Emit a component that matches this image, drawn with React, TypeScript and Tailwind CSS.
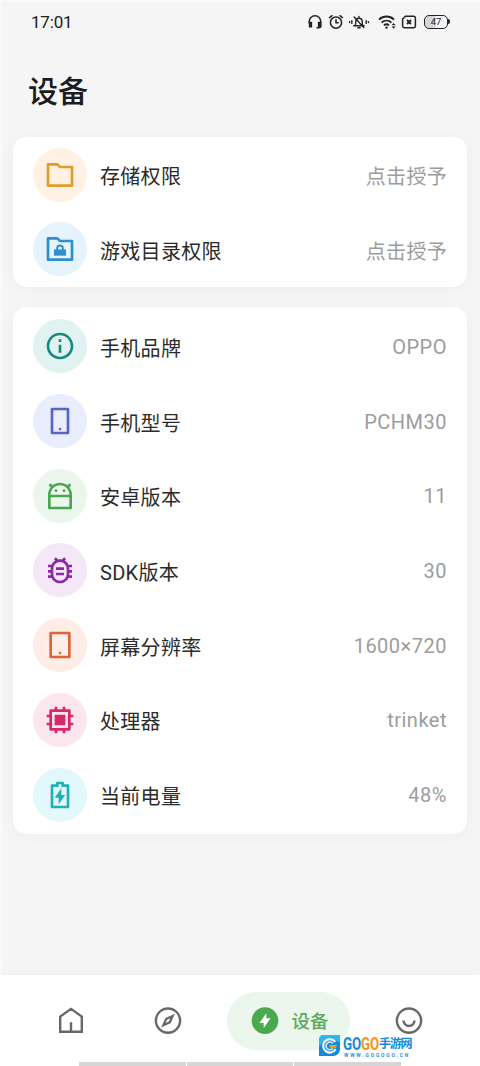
import type { ReactNode } from "react";
import type { IconType } from "react-icons";
import {
  RiAndroidLine,
  RiBattery2ChargeLine,
  RiBug2Line,
  RiCpuLine,
  RiFolderLine,
  RiInformationLine,
  RiSmartphoneLine,
  RiTabletLine,
} from "react-icons/ri";
import { clsx } from "clsx";

interface InfoItem {
  label: string;
  value: string;
  icon: IconType | typeof FolderLockIcon;
  tint: string;
}

function FolderLockIcon({ className }: { className?: string }) {
  return (
    <svg className={className} viewBox="0 0 24 24" fill="none">
      <path d="M3 4h7l2 2h9v14H3z" stroke="currentColor" strokeWidth="2" strokeLinejoin="round" />
      <path d="M7.5 12.3h9V17h-9z" fill="currentColor" />
      <path d="M9.9 13v-1.6a2.1 2.1 0 0 1 4.2 0V13" stroke="currentColor" strokeWidth="1.5" />
    </svg>
  );
}

const PERMISSIONS: InfoItem[] = [
  { label: "存储权限", value: "点击授予", icon: RiFolderLine, tint: "bg-[#fff2e4] text-[#e09c2c]" },
  { label: "游戏目录权限", value: "点击授予", icon: FolderLockIcon, tint: "bg-[#e5f3fd] text-[#308fcb]" },
];

const DEVICE_INFO: InfoItem[] = [
  { label: "手机品牌", value: "OPPO", icon: RiInformationLine, tint: "bg-[#e1f3f1] text-[#168a7d]" },
  { label: "手机型号", value: "PCHM30", icon: RiSmartphoneLine, tint: "bg-[#e9edfd] text-[#5566c4]" },
  { label: "安卓版本", value: "11", icon: RiAndroidLine, tint: "bg-[#ebf6ec] text-[#4ba653]" },
  { label: "SDK版本", value: "30", icon: RiBug2Line, tint: "bg-[#f3e7f8] text-[#8e29a6]" },
  { label: "屏幕分辨率", value: "1600×720", icon: RiTabletLine, tint: "bg-[#feece6] text-[#dc6438]" },
  { label: "处理器", value: "trinket", icon: RiCpuLine, tint: "bg-[#fce6ee] text-[#d8286a]" },
  { label: "当前电量", value: "48%", icon: RiBattery2ChargeLine, tint: "bg-[#e2f8fc] text-[#1fb0b8]" },
];

function StatusBar() {
  return (
    <header className="flex h-[43px] items-center justify-between pr-[30px] pl-[31px] text-[#222]">
      <span className="text-[17px] leading-5 tracking-[-0.2px]">17:01</span>
      <div className="flex items-center">
        {/* headset */}
        <svg className="h-4 w-4" viewBox="0 0 16 16" fill="none" stroke="currentColor" strokeWidth="1.5">
          <path d="M2.2 9.500V7.600a5.800 5.800 0 0 1 11.600 0v4.200a2 2 0 0 1-2 2H9.500" />
          <path d="M2.600 8.600h1.800v4.200H2.600zM11.600 8.600h1.800v4.200h-1.800z" fill="currentColor" />
        </svg>
        {/* alarm */}
        <svg className="ml-[5px] h-4 w-4" viewBox="0 0 16 16" fill="none" stroke="currentColor" strokeWidth="1.5" strokeLinecap="round">
          <circle cx="8" cy="8.6" r="5.6" />
          <path d="M8 5.8v3h2.2M1.6 3.6 4 1.7M14.4 3.6 12 1.7" />
        </svg>
        {/* muted bell with vibration marks */}
        <svg className="ml-[4px] h-4 w-[22px]" viewBox="0 0 22 16" fill="none" stroke="currentColor" strokeWidth="1.4" strokeLinecap="round">
          <path d="M5.8 11.8h10.4M7.2 11.4c.6-1 .6-2.4.6-4a3.2 3.2 0 0 1 6.4 0c0 1.6 0 3 .6 4M11 2.4v1.2M9.8 13.8h2.4M6.2 3l9.6 10.6" />
          <path d="M3.8 6.8v2.6M1.6 7.6v1M18.2 6.8v2.6M20.4 7.6v1" />
        </svg>
        {/* wifi */}
        <svg className="ml-[8px] h-4 w-[19px]" viewBox="0 0 19 16" fill="none" stroke="currentColor" strokeWidth="1.9">
          <path d="M1 5.6c4.4-4.1 10.6-4.1 15 0M3.5 8.6c3-2.7 7-2.7 10 0M6 11.4c1.6-1.4 3.4-1.4 5 0" />
          <circle cx="8.5" cy="13.6" r="1.2" fill="currentColor" stroke="none" />
          <path d="m13.6 11.2 2-2.2 2 2.2zM13.6 12.6l2 2.2 2-2.2z" fill="currentColor" stroke="none" />
        </svg>
        {/* sim without service */}
        <svg className="ml-[4px] h-4 w-4" viewBox="0 0 16 16" fill="none" stroke="currentColor" strokeWidth="1.5">
          <path d="M4.4 2.3h8.4a1.6 1.6 0 0 1 1.6 1.6v8.2a1.6 1.6 0 0 1-1.6 1.6H3.2a1.6 1.6 0 0 1-1.6-1.6V5z" />
          <path d="m6 6 4 4M10 6l-4 4" strokeWidth="1.8" />
        </svg>
        <div className="ml-[7px] flex items-center">
          <div className="flex h-[14px] w-[24px] items-center justify-center rounded-[5px] border-[1.5px] border-[#222] bg-linear-to-r from-[#d5d5d5] from-45% to-[#f5f5f5] to-50% text-[9.5px] leading-none">
            47
          </div>
          <div className="h-[5px] w-[2px] rounded-r-sm bg-[#222]" />
        </div>
      </div>
    </header>
  );
}

function InfoRow({ item, valueClassName }: { item: InfoItem; valueClassName: string }) {
  const Icon = item.icon;
  return (
    <li className="flex h-[74.7px] items-center px-5">
      <span className={clsx("flex size-[54px] shrink-0 items-center justify-center rounded-full", item.tint)}>
        <Icon className="size-8" />
      </span>
      <span className="mt-[5px] ml-[13px] flex-1 text-xl tracking-[0.3px] text-[#2b2b2b]">{item.label}</span>
      <span className={clsx("text-xl text-[#9c9c9c]", valueClassName)}>{item.value}</span>
    </li>
  );
}

function Card({ children, className }: { children: ReactNode; className?: string }) {
  return (
    <ul className={clsx("mx-[13px] rounded-[14px] bg-white shadow-[0_2px_16px_rgba(0,0,0,0.03)]", className)}>
      {children}
    </ul>
  );
}

function Watermark() {
  return (
    <div className="absolute top-[1035px] left-[319px] flex items-start gap-[3px]">
      <svg className="h-[21px] w-[21px]" viewBox="0 0 22 22" preserveAspectRatio="none" fill="none">
        <path d="M5 0h17v15a7 7 0 0 1-7 7H0V5a5 5 0 0 1 5-5z" fill="#168bd4" />
        <path d="M5 0h17v8C15 3 7 4 0 12V5a5 5 0 0 1 5-5z" fill="#36b4ec" />
        <path d="M17 7.2A7 7 0 1 0 17.4 15" stroke="#fff" strokeWidth="2.2" />
        <path d="M14.4 8.8a4 4 0 1 0 .2 5" stroke="#d7f1ff" strokeWidth="1.6" />
        <path d="M10.4 10.5h8.4l-1.6 3.8-2-1.2-2 2z" fill="#f6a11c" />
      </svg>
      <div className="flex flex-col">
        <div className="flex h-[18px] items-center leading-[18px] font-bold whitespace-nowrap">
          <span className="w-[18px] origin-left scale-x-[0.74] text-[18px] text-[#138bd5]">GO</span>
          <span className="w-[18px] origin-left scale-x-[0.74] text-[18px] text-[#f7941d]">GO</span>
          <span className="text-[12px] tracking-[-1.2px] text-[#138bd5]">手游网</span>
        </div>
        <span className="pl-px text-[5px] leading-[5px] font-bold tracking-[1.8px] whitespace-nowrap text-[#2693d5]">
          WWW.GOGOGO.CN
        </span>
      </div>
    </div>
  );
}

function BottomNav() {
  return (
    <nav className="mt-auto flex h-[91px] flex-col bg-white shadow-[0_-2px_16px_rgba(0,0,0,0.025)]">
      <div className="flex flex-1 items-center pt-[4px] text-[#686868]">
        <svg className="ml-[55px] size-8" viewBox="0 0 24 24" fill="none" stroke="currentColor" strokeWidth="1.8">
          <path d="M3.9 20.1V8.7L12 2.9l8.1 5.8v11.4zM12 20.1v-7.2" />
        </svg>
        <svg className="ml-[64.5px] size-8" viewBox="0 0 24 24" fill="none" stroke="currentColor" strokeWidth="1.8">
          <circle cx="12" cy="11.7" r="9.1" />
          <path d="m15.5 8.2-2.2 4.800-4.800 2.200 2.200-4.800z" strokeWidth="1.7" />
        </svg>
        <button className="ml-[43px] flex h-[58px] w-[123px] items-center rounded-full bg-[#ebf6ec] pl-[22px] text-[#48a94f]">
          <svg className="size-8" viewBox="0 0 24 24">
            <circle cx="12" cy="11.7" r="10" fill="currentColor" />
            <path d="M13 9.9h3.200l-5.200 7.300v-3.700H7.800L13 6.200z" fill="#fff" />
          </svg>
          <span className="mt-[4px] ml-[11px] text-[18.5px] font-medium text-[#5caa60]">设备</span>
        </button>
        <svg className="ml-[43px] size-8" viewBox="0 0 24 24" fill="none" stroke="currentColor" strokeWidth="1.8">
          <circle cx="12" cy="11.7" r="9.1" />
          <path d="M7.9 11.7a4.1 4.1 0 0 0 8.2 0" />
        </svg>
      </div>
      <div className="flex h-1 gap-px pl-[79px]">
        <div className="w-[107px] bg-[#d6d6d6]" />
        <div className="w-[106px] bg-[#d6d6d6]" />
        <div className="w-[107px] bg-[#d6d6d6]" />
      </div>
    </nav>
  );
}

export default function App() {
  return (
    <div className="relative flex h-[1066px] w-[480px] flex-col overflow-hidden bg-[#f5f5f5] font-[Roboto,'Noto_Sans_CJK_SC',sans-serif] shadow-[inset_2px_2px_0_#fafafa]">
      <StatusBar />
      <h1 className="mt-[29px] h-[65.4px] pl-[28px] text-[30px] leading-10 font-medium text-[#1c1c1c]">设备</h1>
      <Card>
        {PERMISSIONS.map((item) => (
          <InfoRow key={item.label} item={item} valueClassName="mt-[5px] tracking-[0.3px]" />
        ))}
      </Card>
      <Card className="mt-5 py-[2.3px]">
        {DEVICE_INFO.map((item) => (
          <InfoRow key={item.label} item={item} valueClassName="mt-px tracking-[0.5px]" />
        ))}
      </Card>
      <BottomNav />
      <Watermark />
    </div>
  );
}
